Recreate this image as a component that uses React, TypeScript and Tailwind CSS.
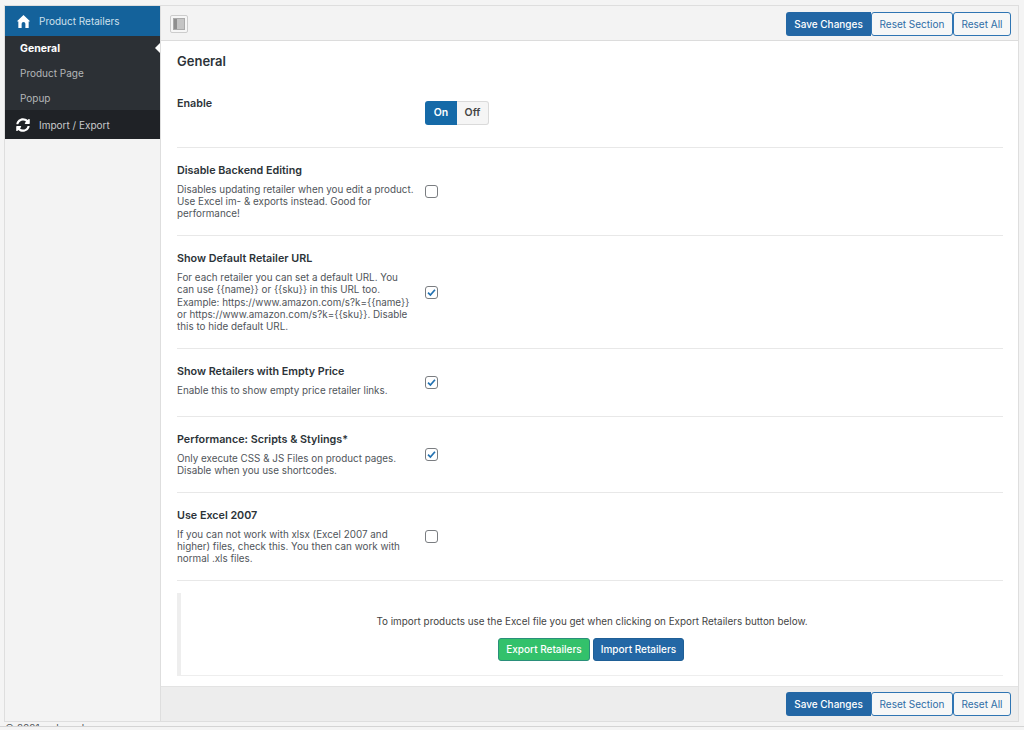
import { FaSyncAlt } from 'react-icons/fa';

function ActionButtons() {
  return (
    <div className="flex">
      <button className="h-[24px] w-[85px] rounded-l-[3px] bg-[#2367a5] text-[10px] font-medium text-white">
        Save Changes
      </button>
      <button className="h-[24px] w-[82px] rounded-[3px] border border-[#2f75b3] bg-[#f6f7f7] text-[10px] text-[#2f6da6]">
        Reset Section
      </button>
      <button className="h-[24px] w-[58px] rounded-[3px] border border-[#2f75b3] bg-[#f6f7f7] text-[10px] text-[#2f6da6]">
        Reset All
      </button>
    </div>
  );
}

function Checkbox({ checked }: { checked?: boolean }) {
  return (
    <span className="flex h-[13px] w-[13px] items-center justify-center rounded-[3px] border border-[#7a7d81] bg-white">
      {checked && (
        <svg viewBox="0 0 13 13" className="h-[13px] w-[13px]">
          <path d="M2.4 6.6 5.2 9.5 10.6 3.2" fill="none" stroke="#2271b1" strokeWidth="2" />
        </svg>
      )}
    </span>
  );
}

function OptionRow({ title, lines, checked }: { title: string; lines: string[]; checked?: boolean }) {
  return (
    <div className="flex min-h-[68px] items-center border-b border-[#e8e8e8] pt-[15.5px] pb-[15.5px]">
      <div className="w-[248px] self-start">
        <h3 className="text-[10.75px] leading-[14px] font-semibold text-[#2c3338]">{title}</h3>
        <div className="mt-[5px] text-[9.85px] leading-[12.4px] text-[#50555a]">
          {lines.map((line) => (
            <div key={line} className="whitespace-nowrap">{line}</div>
          ))}
        </div>
      </div>
      <Checkbox checked={checked} />
    </div>
  );
}

export default function App() {
  return (
    <div className="h-[730px] overflow-hidden bg-[#f4f4f4] pt-[5px] pr-[5px] pl-[4px] font-['Inter',sans-serif]">
      <div className="flex h-[717px] border border-[#dedede] bg-[#f3f3f3]">
        <aside className="w-[156px] shrink-0 border-r border-[#dedede]">
          <div className="flex h-[30px] items-center bg-[#14629b] pl-[11px] text-[10px] text-[#cfe0ec]">
            <svg viewBox="0 0 16 16" className="h-[15px] w-[15px]" fill="#ffffff">
              <path d="M8 1 15 7.6 13.5 8V15H10V10.5a2 2 0 0 0-4 0V15H2.5V8L1 7.6Z" />
            </svg>
            <span className="ml-[8px]">Product Retailers</span>
          </div>
          <div className="relative h-[74px] bg-[#2c3035] text-[10px]">
            <div className="flex h-[25px] items-center pl-[15px] text-[10.5px] font-bold text-white">General</div>
            <div className="flex h-[25px] items-center pl-[15px] text-[#b4b6b8]">Product Page</div>
            <div className="flex h-[25px] items-center pl-[15px] text-[#b4b6b8]">Popup</div>
            <div className="absolute top-[7px] right-0 h-0 w-0 border-y-[5px] border-r-[5px] border-y-transparent border-r-white" />
          </div>
          <div className="flex h-[29px] items-center bg-[#1f2226] pt-[1px] pl-[11px] text-[10px] text-[#c9cacc]">
            <FaSyncAlt className="h-[14px] w-[14px] text-white" />
            <span className="ml-[9px]">Import / Export</span>
          </div>
        </aside>
        <div className="flex min-w-0 flex-1 flex-col">
          <header className="flex h-[35px] shrink-0 items-center justify-between border-b border-[#dcdcdc] pt-[2px] pr-[7px] pl-[9px]">
            <div className="flex h-[18px] w-[18px] items-center justify-center rounded-[2px] border border-[#cccccc] bg-[#f6f6f6]">
              <span className="flex h-[12px] w-[12px] border border-[#aaaaaa] bg-[#c4c4c4]">
                <span className="h-full w-[3px] bg-[#8f8f8f]" />
              </span>
            </div>
            <ActionButtons />
          </header>
          <main className="flex-1 bg-white pr-[15px] pl-[16px]">
            <h2 className="pt-[13px] text-[13px] leading-[15px] font-semibold text-[#2c3338]">General</h2>
            <div className="mt-[15px] flex h-[64px] border-b border-[#e8e8e8]">
              <h3 className="w-[248px] pt-[13px] text-[10.75px] leading-[14px] font-semibold text-[#2c3338]">Enable</h3>
              <div className="mt-[17px] flex h-[24px] w-[64px] text-[10.5px] font-semibold">
                <span className="flex w-[32px] items-center justify-center rounded-l-[3px] bg-[#156aa8] text-white">On</span>
                <span className="flex flex-1 items-center justify-center rounded-r-[3px] border border-l-0 border-[#dadada] bg-[#f5f5f5] text-[#444]">
                  Off
                </span>
              </div>
            </div>
            <OptionRow
              title="Disable Backend Editing"
              lines={['Disables updating retailer when you edit a product.', 'Use Excel im- & exports instead. Good for', 'performance!']}
            />
            <OptionRow
              checked
              title="Show Default Retailer URL"
              lines={[
                'For each retailer you can set a default URL. You',
                'can use {{name}} or {{sku}} in this URL too.',
                'Example: https://www.amazon.com/s?k={{name}}',
                'or https://www.amazon.com/s?k={{sku}}. Disable',
                'this to hide default URL.',
              ]}
            />
            <OptionRow checked title="Show Retailers with Empty Price" lines={['Enable this to show empty price retailer links.']} />
            <OptionRow
              checked
              title="Performance: Scripts & Stylings*"
              lines={['Only execute CSS & JS Files on product pages.', 'Disable when you use shortcodes.']}
            />
            <OptionRow
              title="Use Excel 2007"
              lines={['If you can not work with xlsx (Excel 2007 and', 'higher) files, check this. You then can work with', 'normal .xls files.']}
            />
            <div className="mt-[12px] flex h-[83px] flex-col items-center border-b border-l-[4px] border-[#eeeeee] pt-[21px]">
              <p className="text-[9.9px] leading-[14px] text-[#444]">
                To import products use the Excel file you get when clicking on Export Retailers button below.
              </p>
              <div className="mt-[10px] mr-[2px] flex gap-[3px]">
                <button className="h-[23px] w-[92px] rounded-[3px] border border-[#2a8f7a] bg-[#33c16b] text-[10px] font-medium text-white">
                  Export Retailers
                </button>
                <button className="h-[23px] w-[91px] rounded-[3px] border border-[#1f5f96] bg-[#2367a5] text-[10px] font-medium text-white">
                  Import Retailers
                </button>
              </div>
            </div>
          </main>
          <footer className="flex h-[35px] shrink-0 items-center justify-end border-t border-[#e3e3e3] bg-[#ededed] pr-[7px]">
            <ActionButtons />
          </footer>
        </div>
      </div>
      <div className="h-[4px] overflow-hidden pl-[1px] text-[10px] leading-[12px] text-[#50555a]">© 2021 welaunch</div>
      <div className="-mx-[5px] border-t border-[#d4d4d4]" />
    </div>
  );
}
